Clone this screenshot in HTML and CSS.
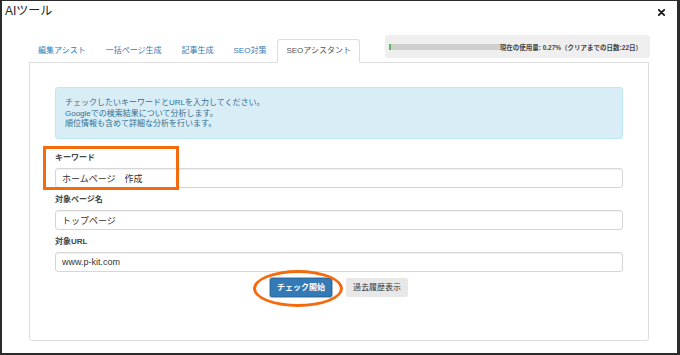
FILE: index.html
```html
<!DOCTYPE html>
<html lang="ja">
<head>
<meta charset="utf-8">
<title>AIツール</title>
<link rel="stylesheet" href="styles.css">
</head>
<body>
<div class="frame">
  <div class="header">
    <div class="title">AIツール</div>
    <svg class="close" width="7" height="7" viewBox="0 0 7 7"><path d="M0.8 0.8L6.2 6.2M6.2 0.8L0.8 6.2" stroke="#111" stroke-width="1.7" stroke-linecap="round"/></svg>
  </div>
  <div class="body">
    <div class="tabs-row">
      <ul class="tabs">
        <li class="tab">編集アシスト</li>
        <li class="tab">一括ページ生成</li>
        <li class="tab">記事生成</li>
        <li class="tab">SEO対策</li>
        <li class="tab active">SEOアシスタント</li>
      </ul>
      <div class="usage">
        <div class="bar"><div class="bar-fill"></div></div>
        <div class="usage-text">現在の使用量: 0.27%（クリアまでの日数:22日）</div>
      </div>
    </div>
    <div class="panel">
      <div class="alert">
        <div>チェックしたいキーワードとURLを入力してください。</div>
        <div>Googleでの検索結果について分析します。</div>
        <div>順位情報も含めて詳細な分析を行います。</div>
      </div>
      <div class="group first">
        <div class="mark-rect"></div>
        <div class="label">キーワード</div>
        <input class="field" type="text" value="ホームページ　作成">
      </div>
      <div class="group">
        <div class="label">対象ページ名</div>
        <input class="field" type="text" value="トップページ">
      </div>
      <div class="group">
        <div class="label">対象URL</div>
        <input class="field" type="text" value="www.p-kit.com">
      </div>
      <div class="buttons">
        <div class="btn-wrap">
          <button class="btn primary">チェック開始</button>
          <div class="mark-ellipse"></div>
        </div>
        <button class="btn default">過去履歴表示</button>
      </div>
    </div>
  </div>
</div>
</body>
</html>
```

FILE: styles.css
```css
* { box-sizing: border-box; }
html, body { margin: 0; padding: 0; background: #fff; }
body {
  font-family: "Liberation Sans", "Noto Sans CJK JP", sans-serif;
  color: #333;
}
.frame {
  width: 680px;
  height: 355px;
  border-style: solid;
  border-color: #2b2b2b;
  border-width: 1px 3px 2px 2px;
  background: #fff;
  overflow: hidden;
}
.header {
  height: 34px;
  display: flex;
  justify-content: space-between;
  align-items: flex-start;
  padding: 3px 12px 0 3px;
}
.title {
  font-size: 12px;
  line-height: 15px;
  color: #222;
}
.close { margin-top: 5px; }
.body { padding: 0 28px 0 27px; }
.tabs-row {
  height: 28px;
  display: flex;
  justify-content: space-between;
  align-items: flex-end;
  margin-bottom: -1px;
  position: relative;
  z-index: 1;
}
.tabs {
  list-style: none;
  margin: 0;
  padding: 0;
  display: flex;
}
.tab {
  height: 24px;
  line-height: 22px;
  padding: 0 8px;
  margin-right: 2px;
  border: 1px solid transparent;
  font-size: 8px;
  color: #337ab7;
  white-space: nowrap;
}
.tab.active {
  background: #fff;
  border-color: #ddd;
  border-bottom-color: #fff;
  border-radius: 3px 3px 0 0;
  color: #555;
}
.usage {
  width: 265px;
  height: 23px;
  margin-bottom: 5px;
  margin-right: -1px;
  background: #efefef;
  border-radius: 3px;
  display: flex;
  align-items: center;
  padding: 0 8px 0 4px;
}
.bar {
  flex: 1;
  height: 6px;
  background: #cfcfcf;
}
.bar-fill {
  width: 2px;
  height: 100%;
  background: #5cb85c;
}
.usage-text {
  font-size: 6.5px;
  font-weight: bold;
  color: #444;
  white-space: nowrap;
}
.panel {
  border: 1px solid #ddd;
  border-radius: 0 0 3px 3px;
  padding: 24px 25px 43px 25px;
}
.alert {
  background: #d9edf7;
  border: 1px solid #bce8f1;
  border-radius: 3px;
  color: #31708f;
  font-size: 8px;
  line-height: 10.7px;
  padding: 10px 9px 8px;
}
.group { position: relative; margin-top: 6px; }
.group.first { margin-top: 13px; }
.label {
  font-size: 8px;
  line-height: 11px;
  font-weight: bold;
  color: #444;
  margin-bottom: 5px;
}
.field {
  display: block;
  width: 100%;
  height: 20px;
  margin: 0;
  padding: 0 6px;
  border: 1px solid #d6d6d6;
  border-radius: 3px;
  box-shadow: inset 0 1px 1px rgba(0,0,0,0.06);
  font-family: "Liberation Sans", "Noto Sans CJK JP", sans-serif;
  font-size: 9px;
  color: #333;
  background: #fff;
  outline: none;
}
.mark-rect {
  position: absolute;
  left: -12px;
  top: -6px;
  width: 136px;
  height: 44px;
  border: 3px solid #f56a0c;
  pointer-events: none;
}
.buttons {
  margin-top: 6px;
  display: flex;
  justify-content: center;
  gap: 14px;
}
.btn-wrap { position: relative; }
.btn {
  display: block;
  height: 19px;
  margin: 0;
  padding: 0 6px;
  font-family: "Liberation Sans", "Noto Sans CJK JP", sans-serif;
  font-size: 8px;
  line-height: 17px;
  border-radius: 2px;
  white-space: nowrap;
}
.btn.primary {
  background: #337ab7;
  border: 1px solid #2e6da4;
  box-shadow: 0 0 0 1px #a9b8c8;
  color: #fff;
  font-weight: bold;
}
.btn.default {
  background: #e8e8e8;
  border: 1px solid #e8e8e8;
  color: #333;
}
.mark-ellipse {
  position: absolute;
  left: -17px;
  top: -8px;
  width: 90px;
  height: 37px;
  border: 3px solid #f56a0c;
  border-radius: 50%;
  pointer-events: none;
}
```
